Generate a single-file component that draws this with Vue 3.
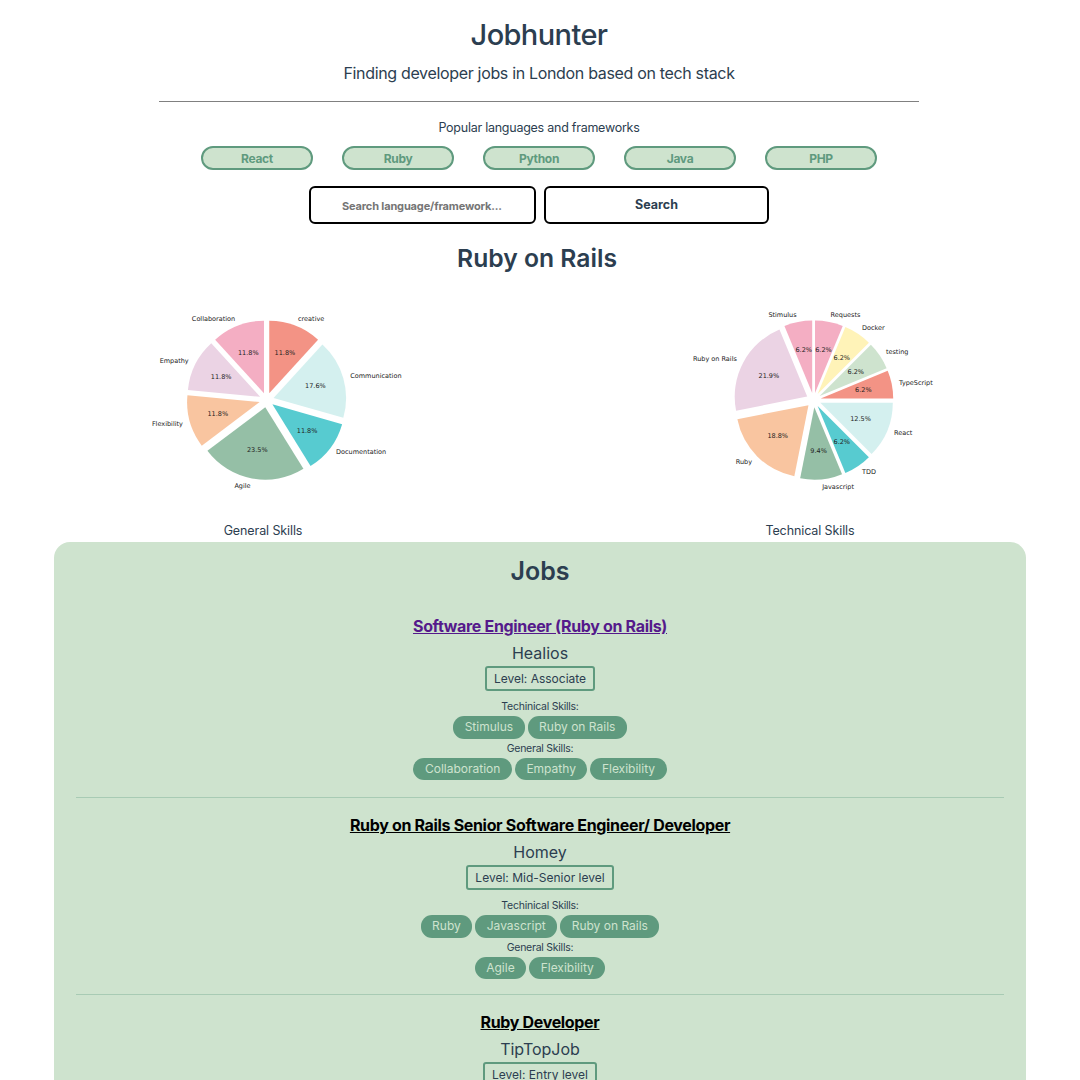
<template>
  <div class="page">
    <header class="header">
      <h1>Jobhunter</h1>
      <p class="tagline">Finding developer jobs in London based on tech stack</p>
      <hr class="rule" />
    </header>

    <p class="popular-title">Popular languages and frameworks</p>
    <div class="popular">
      <button v-for="lang in popular" :key="lang" class="lang-btn">{{ lang }}</button>
    </div>

    <form class="search" @submit.prevent>
      <input class="search-input" type="text" placeholder="Search language/framework..." />
      <button class="search-btn">Search</button>
    </form>

    <h2 class="stack-title">Ruby on Rails</h2>

    <div class="charts">
      <figure v-for="chart in charts" :key="chart.title" class="chart">
        <svg width="400" height="240" viewBox="0 0 400 240">
          <path v-for="s in chart.slices" :key="s.label" :d="s.d" :fill="s.color" />
          <text
            v-for="s in chart.slices"
            :key="s.label + '-label'"
            class="pie-text"
            :x="s.lx"
            :y="s.ly"
            :text-anchor="s.anchor"
            dominant-baseline="central"
          >{{ s.label }}</text>
          <text
            v-for="s in chart.slices"
            :key="s.label + '-pct'"
            class="pie-text"
            :x="s.px"
            :y="s.py"
            text-anchor="middle"
            dominant-baseline="central"
          >{{ s.pct }}%</text>
        </svg>
        <figcaption>{{ chart.title }}</figcaption>
      </figure>
    </div>

    <section class="jobs">
      <h2 class="jobs-title">Jobs</h2>
      <article v-for="job in jobs" :key="job.title" class="job">
        <a href="#" class="job-title" :class="{ visited: job.visited }">{{ job.title }}</a>
        <div class="company">{{ job.company }}</div>
        <div class="level">Level: {{ job.level }}</div>
        <template v-if="job.technical">
          <div class="skills-label first">Techinical Skills:</div>
          <div class="chips">
            <span v-for="s in job.technical" :key="s" class="chip">{{ s }}</span>
          </div>
          <div class="skills-label">General Skills:</div>
          <div class="chips">
            <span v-for="s in job.general" :key="s" class="chip">{{ s }}</span>
          </div>
        </template>
      </article>
    </section>
  </div>
</template>

<script setup>
const popular = ['React', 'Ruby', 'Python', 'Java', 'PHP']

const RADIUS = 72.5
const EXPLODE = 7.25
const CX = 203.6
const CY = 121

// one decimal, ties go to the even digit (6.25 -> 6.2, 18.75 -> 18.8)
const formatPct = (value) => {
  const x = value * 10
  let r = Math.round(x)
  if (Math.abs(x - Math.floor(x) - 0.5) < 1e-9 && r % 2 === 1) r -= 1
  return (r / 10).toFixed(1)
}

// same layout maths as a matplotlib pie: starts at 90deg, runs counter-clockwise
const buildPie = (rows) => {
  const total = rows.reduce((sum, r) => sum + r.value, 0)
  let angle = 90
  return rows.map((r) => {
    const sweep = (r.value / total) * 360
    const mid = ((angle + sweep / 2) * Math.PI) / 180
    const a0 = (angle * Math.PI) / 180
    const a1 = ((angle + sweep) * Math.PI) / 180
    const ox = CX + EXPLODE * Math.cos(mid)
    const oy = CY - EXPLODE * Math.sin(mid)
    const d = [
      `M${ox} ${oy}`,
      `L${ox + RADIUS * Math.cos(a0)} ${oy - RADIUS * Math.sin(a0)}`,
      `A${RADIUS} ${RADIUS} 0 ${sweep > 180 ? 1 : 0} 0 ${ox + RADIUS * Math.cos(a1)} ${oy - RADIUS * Math.sin(a1)}`,
      'Z'
    ].join(' ')
    angle += sweep
    return {
      label: r.label,
      color: r.color,
      d,
      pct: formatPct((r.value / total) * 100),
      lx: ox + RADIUS * 1.1 * Math.cos(mid),
      ly: oy - RADIUS * 1.1 * Math.sin(mid),
      px: ox + RADIUS * 0.6 * Math.cos(mid),
      py: oy - RADIUS * 0.6 * Math.sin(mid),
      anchor: Math.cos(mid) < 0 ? 'end' : 'start'
    }
  })
}

const charts = [
  {
    title: 'General Skills',
    slices: buildPie([
      { label: 'Collaboration', value: 2, color: '#f4aec3' },
      { label: 'Empathy', value: 2, color: '#ebd3e4' },
      { label: 'Flexibility', value: 2, color: '#f9c5a0' },
      { label: 'Agile', value: 4, color: '#95bfa6' },
      { label: 'Documentation', value: 2, color: '#57cbd0' },
      { label: 'Communication', value: 3, color: '#d4f0ef' },
      { label: 'creative', value: 2, color: '#f39385' }
    ])
  },
  {
    title: 'Technical Skills',
    slices: buildPie([
      { label: 'Stimulus', value: 2, color: '#f4aec3' },
      { label: 'Ruby on Rails', value: 7, color: '#ebd3e4' },
      { label: 'Ruby', value: 6, color: '#f9c5a0' },
      { label: 'Javascript', value: 3, color: '#95bfa6' },
      { label: 'TDD', value: 2, color: '#57cbd0' },
      { label: 'React', value: 4, color: '#d4f0ef' },
      { label: 'TypeScript', value: 2, color: '#f39385' },
      { label: 'testing', value: 2, color: '#cee3ce' },
      { label: 'Docker', value: 2, color: '#fff3b8' },
      { label: 'Requests', value: 2, color: '#f4aec3' }
    ])
  }
]

const jobs = [
  {
    title: 'Software Engineer (Ruby on Rails)',
    company: 'Healios',
    level: 'Associate',
    visited: true,
    technical: ['Stimulus', 'Ruby on Rails'],
    general: ['Collaboration', 'Empathy', 'Flexibility']
  },
  {
    title: 'Ruby on Rails Senior Software Engineer/ Developer',
    company: 'Homey',
    level: 'Mid-Senior level',
    technical: ['Ruby', 'Javascript', 'Ruby on Rails'],
    general: ['Agile', 'Flexibility']
  },
  {
    title: 'Ruby Developer',
    company: 'TipTopJob',
    level: 'Entry level'
  }
]
</script>

<style>
html,
body {
  margin: 0;
  overflow: hidden;
  background: #fff;
}
</style>

<style scoped>
.page {
  height: 1080px;
  overflow: hidden;
  font-family: Inter, "Liberation Sans", sans-serif;
  color: #2c3e50;
  text-align: center;
}

.header {
  padding-top: 17px;
  padding-right: 2px;
}

h1 {
  margin: 0;
  font-size: 29px;
  line-height: 36px;
  font-weight: 500;
  letter-spacing: -0.6px;
}

.tagline {
  margin: 8px 0 0;
  font-size: 16px;
  line-height: 24px;
  letter-spacing: -0.33px;
}

.rule {
  width: 760px;
  margin: 16px auto 0 159px;
  border: 0;
  border-top: 1px solid #808080;
}

.popular-title {
  margin: 17px 0 0;
  padding-right: 2px;
  font-size: 12.5px;
  line-height: 18px;
  letter-spacing: -0.25px;
}

.popular {
  display: flex;
  justify-content: center;
  gap: 29px;
  margin-top: 9px;
  padding-right: 2px;
}

.lang-btn {
  width: 112px;
  height: 24px;
  padding: 0;
  background: #cee3ce;
  border: 2px solid #5f9a7e;
  border-radius: 12px;
  color: #5f9a7e;
  font-family: inherit;
  font-size: 12px;
  font-weight: 700;
  letter-spacing: -0.3px;
}

.search {
  display: flex;
  justify-content: center;
  gap: 8px;
  margin-top: 16px;
  padding-right: 2px;
}

.search-input {
  box-sizing: border-box;
  width: 227px;
  height: 38px;
  padding: 1px 0 0 31px;
  background: #fff;
  border: 2px solid #000;
  border-radius: 6px;
  font-family: inherit;
  font-size: 11px;
  font-weight: 700;
  letter-spacing: -0.15px;
}

.search-input::placeholder {
  color: #757575;
  opacity: 1;
}

.search-btn {
  box-sizing: border-box;
  width: 225px;
  height: 38px;
  padding-bottom: 2px;
  background: #fff;
  border: 2px solid #000;
  border-radius: 6px;
  color: #2c3e50;
  font-family: inherit;
  font-size: 12.5px;
  font-weight: 700;
}

.stack-title {
  margin: 18px 0 0;
  padding-right: 6px;
  font-size: 24.7px;
  line-height: 32px;
  font-weight: 600;
}

.charts {
  display: flex;
  gap: 147px;
  margin-top: 5px;
  padding-left: 63px;
}

.chart {
  width: 400px;
  margin: 0;
}

.chart svg {
  display: block;
}

.pie-text {
  font-family: "DejaVu Sans", sans-serif;
  font-size: 6.5px;
  fill: #222;
}

figcaption {
  font-size: 12.5px;
  line-height: 18px;
  margin-top: 3px;
  letter-spacing: -0.1px;
}

.jobs {
  width: 972px;
  margin: 2px auto 0;
  padding: 13px 0 0;
  box-sizing: border-box;
  min-height: 600px;
  background: #cee3ce;
  border-radius: 16px;
}

.jobs-title {
  margin: 0;
  font-size: 25px;
  line-height: 32px;
  font-weight: 600;
}

.job {
  margin: 0 22px;
  padding: 16px 0 15px;
  border-bottom: 1px solid #a8cbb4;
}

.jobs-title + .job {
  padding: 28px 0 17px;
}

.job:last-child {
  border-bottom: 0;
}

.job-title {
  display: block;
  color: #000;
  font-size: 16px;
  line-height: 22px;
  font-weight: 700;
  letter-spacing: -0.33px;
}

.job-title.visited {
  color: #551a8b;
}

.company {
  margin-top: 5px;
  font-size: 16px;
  line-height: 22px;
}

.level {
  display: table;
  margin: 2px auto 0;
  padding: 0 7px;
  border: 2px solid #5f9a7e;
  border-radius: 3px;
  font-size: 12px;
  line-height: 21px;
}

.skills-label {
  font-size: 10.5px;
  line-height: 14px;
  margin-top: 3px;
  letter-spacing: -0.25px;
}

.skills-label.first {
  margin-top: 9px;
}

.chips {
  display: flex;
  justify-content: center;
  gap: 3px;
  margin-top: 2px;
}

.chip {
  padding: 0 11.5px;
  background: #5f9a7e;
  border-radius: 11px;
  color: #cee3ce;
  font-size: 12px;
  line-height: 22.5px;
}
</style>
